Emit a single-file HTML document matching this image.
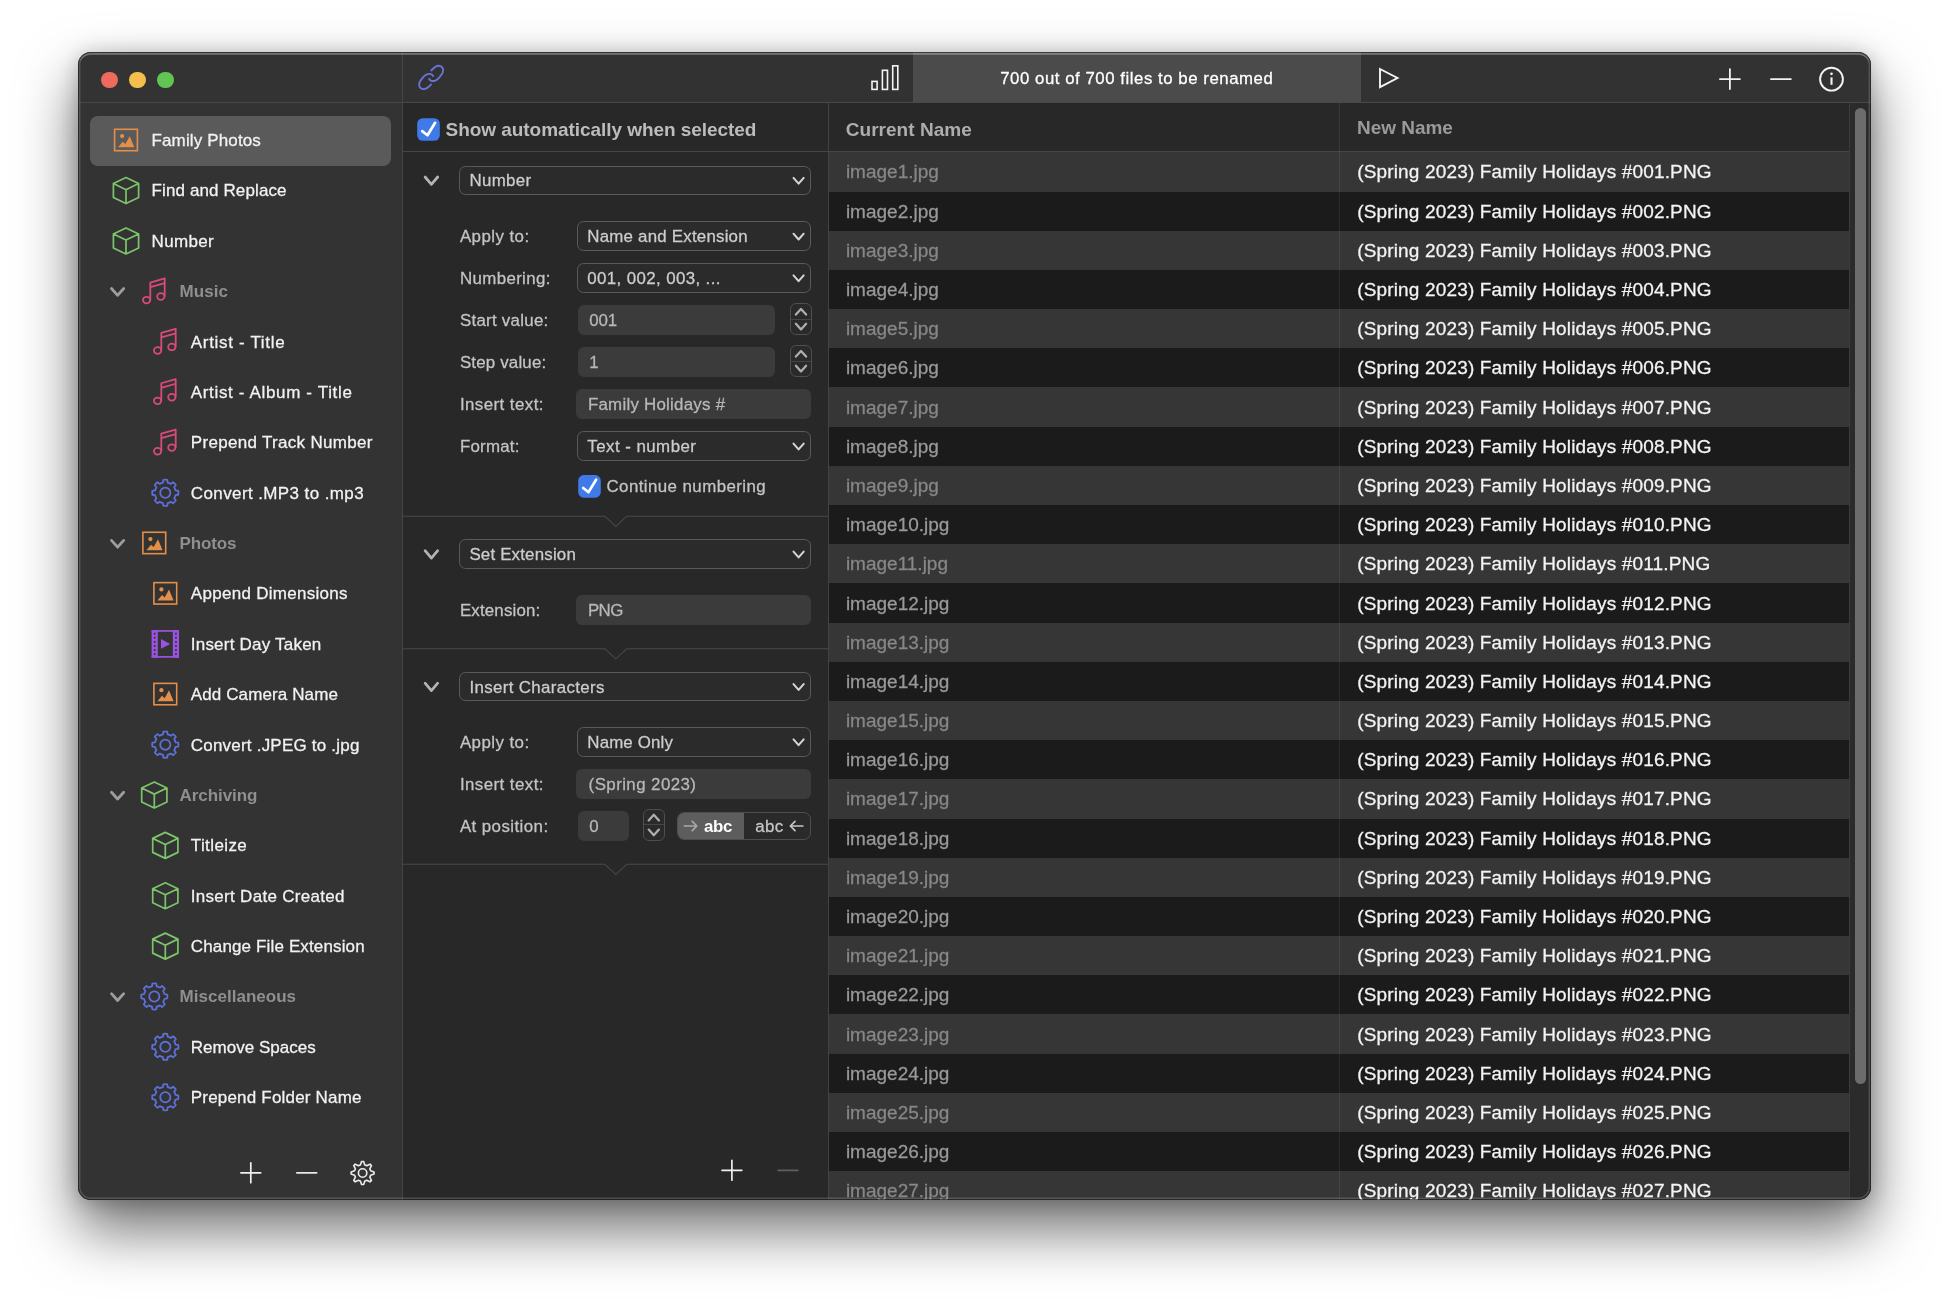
<!DOCTYPE html>
<html lang="en"><head><meta charset="utf-8"><title>Renamer</title>
<style>
html,body{margin:0;padding:0;background:#fff;}
body{width:1949px;height:1303px;position:relative;overflow:hidden;font-family:"Liberation Sans", sans-serif;}
.win{position:absolute;left:78px;top:52px;width:1793px;height:1148px;border-radius:13px;background:#282828;
 box-shadow:0 29px 58px 1px rgba(0,0,0,.56),0 2px 20px rgba(0,0,0,.22);}
.clip{position:absolute;left:0;top:0;width:1793px;height:1148px;border-radius:13px;overflow:hidden;}
.pg{position:absolute;left:-78px;top:-52px;width:1949px;height:1303px;will-change:transform;}
.a{position:absolute;display:block;overflow:visible;}
.t{position:absolute;white-space:nowrap;line-height:24px;height:24px;-webkit-text-stroke:0.28px currentColor;}
.b{position:absolute;box-sizing:border-box;}
.pop{position:absolute;box-sizing:border-box;border:1px solid #5a5a5a;border-radius:6.5px;background:#2b2b2b;}
.fld{position:absolute;box-sizing:border-box;border-radius:6px;background:#3b3b3b;}
.stp{position:absolute;box-sizing:border-box;border:1px solid #4e4e4e;border-radius:6px;background:#2a2a2a;}
.rim{position:absolute;left:0;top:0;right:0;bottom:0;border-radius:13px;box-shadow:inset 0 0 0 0.9px rgba(0,0,0,.55), inset 0 0 0 2.4px rgba(255,255,255,.17), inset 0 3px 0 0 rgba(255,255,255,.18);pointer-events:none;}

</style></head><body>
<div class="win"><div class="clip"><div class="pg">
<div class="b" style="left:78px;top:52px;width:324.5px;height:1148px;background:#333333"></div>
<div class="b" style="left:402.5px;top:52px;width:1469px;height:50.5px;background:#323232"></div>
<div class="b" style="left:913px;top:52px;width:448px;height:50.5px;background:#4b4b4b"></div>
<div class="b" style="left:78px;top:101.9px;width:1793px;height:1.4px;background:#484848"></div>
<div class="b" style="left:402px;top:52px;width:1px;height:1148px;background:#454545"></div>
<div class="b" style="left:403px;top:103px;width:425px;height:1096px;background:#282828"></div>
<div class="b" style="left:828px;top:103px;width:1px;height:1096px;background:#434343"></div>
<div class="b" style="left:829px;top:103px;width:1042px;height:48.5px;background:#282828"></div>
<div class="b" style="left:403px;top:151.3px;width:1446px;height:1px;background:#454545"></div>
<div class="b" style="left:100.89999999999999px;top:71.6px;width:16.8px;height:16.8px;border-radius:50%;background:#ec6a5e"></div>
<div class="b" style="left:128.9px;top:71.6px;width:16.8px;height:16.8px;border-radius:50%;background:#f5bf4f"></div>
<div class="b" style="left:156.9px;top:71.6px;width:16.8px;height:16.8px;border-radius:50%;background:#61c554"></div>
<div class="b" style="left:90px;top:115.5px;width:301px;height:50px;border-radius:8px;background:#5a5a5a"></div>
<svg class="a" style="left:113px;top:128px" width="26" height="24" viewBox="0 0 26 24"><g transform="translate(0.80 0.50)"><rect x="0.8" y="0.8" width="22.799999999999997" height="21.4" fill="none" stroke="#e48f49" stroke-width="1.6"/><circle cx="8.3" cy="7.6" r="2.1" fill="#e48f49"/><path d="M4.3 18.7 L8.9 13.2 L11.6 15.6 L15.9 7.7 L20.5 18.7 Z" fill="#e48f49"/></g></svg>
<div class="t" style="left:151.50px;top:129.11px;font-size:17.0px;color:#f2f2f2;letter-spacing:0.138px;">Family Photos</div>
<svg class="a" style="left:112px;top:176px" width="29" height="30" viewBox="0 0 29 30"><g transform="translate(0.00 0.47)"><path d="M14.00 1.10 L26.60 7.10 L26.60 21.10 L14.00 27.10 L1.40 21.10 L1.40 7.10 Z M1.40 7.10 L14.00 13.20 L26.60 7.10 M14.00 13.20 L14.00 27.10" fill="none" stroke="#7cc56b" stroke-width="1.7" stroke-linejoin="round" stroke-linecap="round"/></g></svg>
<div class="t" style="left:151.50px;top:179.48px;font-size:17.0px;color:#f2f2f2;letter-spacing:0.121px;">Find and Replace</div>
<svg class="a" style="left:112px;top:226px" width="29" height="30" viewBox="0 0 29 30"><g transform="translate(0.00 0.84)"><path d="M14.00 1.10 L26.60 7.10 L26.60 21.10 L14.00 27.10 L1.40 21.10 L1.40 7.10 Z M1.40 7.10 L14.00 13.20 L26.60 7.10 M14.00 13.20 L14.00 27.10" fill="none" stroke="#7cc56b" stroke-width="1.7" stroke-linejoin="round" stroke-linecap="round"/></g></svg>
<div class="t" style="left:151.50px;top:229.85px;font-size:17.0px;color:#f2f2f2;letter-spacing:0.355px;">Number</div>
<svg class="a" style="left:109px;top:286px" width="18" height="12" viewBox="0 0 18 12"><g transform="translate(0.50 0.51)"><path d="M2 2 L8.10 8.80 L14.20 2" fill="none" stroke="#9e9e9e" stroke-width="2.8" stroke-linecap="round" stroke-linejoin="round"/></g></svg>
<svg class="a" style="left:141px;top:277px" width="27" height="30" viewBox="0 0 27 30"><g transform="translate(0.70 0.11)"><g fill="none" stroke="#d94a7c" stroke-width="1.8" stroke-linecap="round" stroke-linejoin="round"><ellipse cx="4.9" cy="23.0" rx="3.6" ry="3.3"/><ellipse cx="19.1" cy="19.4" rx="3.6" ry="3.3"/><path d="M8.6 22.6 V5.4 L23.0 1.3 V19.0 M8.6 10.0 L23.0 5.9"/></g></g></svg>
<div class="t" style="left:179.60px;top:280.22px;font-size:17.0px;color:#8f8f8f;font-weight:700;-webkit-text-stroke:0;letter-spacing:0.023px;">Music</div>
<svg class="a" style="left:152px;top:327px" width="27" height="30" viewBox="0 0 27 30"><g transform="translate(0.70 0.48)"><g fill="none" stroke="#d94a7c" stroke-width="1.8" stroke-linecap="round" stroke-linejoin="round"><ellipse cx="4.9" cy="23.0" rx="3.6" ry="3.3"/><ellipse cx="19.1" cy="19.4" rx="3.6" ry="3.3"/><path d="M8.6 22.6 V5.4 L23.0 1.3 V19.0 M8.6 10.0 L23.0 5.9"/></g></g></svg>
<div class="t" style="left:190.80px;top:330.59px;font-size:17.0px;color:#f2f2f2;letter-spacing:0.677px;">Artist - Title</div>
<svg class="a" style="left:152px;top:377px" width="27" height="30" viewBox="0 0 27 30"><g transform="translate(0.70 0.85)"><g fill="none" stroke="#d94a7c" stroke-width="1.8" stroke-linecap="round" stroke-linejoin="round"><ellipse cx="4.9" cy="23.0" rx="3.6" ry="3.3"/><ellipse cx="19.1" cy="19.4" rx="3.6" ry="3.3"/><path d="M8.6 22.6 V5.4 L23.0 1.3 V19.0 M8.6 10.0 L23.0 5.9"/></g></g></svg>
<div class="t" style="left:190.80px;top:380.96px;font-size:17.0px;color:#f2f2f2;letter-spacing:0.651px;">Artist - Album - Title</div>
<svg class="a" style="left:152px;top:428px" width="27" height="30" viewBox="0 0 27 30"><g transform="translate(0.70 0.22)"><g fill="none" stroke="#d94a7c" stroke-width="1.8" stroke-linecap="round" stroke-linejoin="round"><ellipse cx="4.9" cy="23.0" rx="3.6" ry="3.3"/><ellipse cx="19.1" cy="19.4" rx="3.6" ry="3.3"/><path d="M8.6 22.6 V5.4 L23.0 1.3 V19.0 M8.6 10.0 L23.0 5.9"/></g></g></svg>
<div class="t" style="left:190.80px;top:431.33px;font-size:17.0px;color:#f2f2f2;letter-spacing:0.312px;">Prepend Track Number</div>
<svg class="a" style="left:150px;top:477px" width="31" height="31" viewBox="0 0 31 31"><g transform="translate(0.30 0.79)"><path d="M25.22 12.66 L27.95 13.04 A13.10 13.10 0 0 1 27.95 16.96 L25.22 17.34 A10.48 10.48 0 0 1 23.88 20.57 L25.54 22.77 A13.10 13.10 0 0 1 22.77 25.54 L20.57 23.88 A10.48 10.48 0 0 1 17.34 25.22 L16.96 27.95 A13.10 13.10 0 0 1 13.04 27.95 L12.66 25.22 A10.48 10.48 0 0 1 9.43 23.88 L7.23 25.54 A13.10 13.10 0 0 1 4.46 22.77 L6.12 20.57 A10.48 10.48 0 0 1 4.78 17.34 L2.05 16.96 A13.10 13.10 0 0 1 2.05 13.04 L4.78 12.66 A10.48 10.48 0 0 1 6.12 9.43 L4.46 7.23 A13.10 13.10 0 0 1 7.23 4.46 L9.43 6.12 A10.48 10.48 0 0 1 12.66 4.78 L13.04 2.05 A13.10 13.10 0 0 1 16.96 2.05 L17.34 4.78 A10.48 10.48 0 0 1 20.57 6.12 L22.77 4.46 A13.10 13.10 0 0 1 25.54 7.23 L23.88 9.43 A10.48 10.48 0 0 1 25.22 12.66 Z" fill="none" stroke="#5d6fd9" stroke-width="1.8" stroke-linejoin="round"/><circle cx="15.0" cy="15.0" r="5.1" fill="none" stroke="#5d6fd9" stroke-width="1.8"/></g></svg>
<div class="t" style="left:190.80px;top:481.70px;font-size:17.0px;color:#f2f2f2;letter-spacing:0.393px;">Convert .MP3 to .mp3</div>
<svg class="a" style="left:109px;top:538px" width="18" height="12" viewBox="0 0 18 12"><g transform="translate(0.50 0.36)"><path d="M2 2 L8.10 8.80 L14.20 2" fill="none" stroke="#9e9e9e" stroke-width="2.8" stroke-linecap="round" stroke-linejoin="round"/></g></svg>
<svg class="a" style="left:142px;top:531px" width="26" height="24" viewBox="0 0 26 24"><g transform="translate(0.10 0.46)"><rect x="0.8" y="0.8" width="22.799999999999997" height="21.4" fill="none" stroke="#e48f49" stroke-width="1.6"/><circle cx="8.3" cy="7.6" r="2.1" fill="#e48f49"/><path d="M4.3 18.7 L8.9 13.2 L11.6 15.6 L15.9 7.7 L20.5 18.7 Z" fill="#e48f49"/></g></svg>
<div class="t" style="left:179.60px;top:532.07px;font-size:17.0px;color:#8f8f8f;font-weight:700;-webkit-text-stroke:0;letter-spacing:-0.135px;">Photos</div>
<svg class="a" style="left:153px;top:581px" width="26" height="24" viewBox="0 0 26 24"><g transform="translate(0.10 0.83)"><rect x="0.8" y="0.8" width="22.799999999999997" height="21.4" fill="none" stroke="#e48f49" stroke-width="1.6"/><circle cx="8.3" cy="7.6" r="2.1" fill="#e48f49"/><path d="M4.3 18.7 L8.9 13.2 L11.6 15.6 L15.9 7.7 L20.5 18.7 Z" fill="#e48f49"/></g></svg>
<div class="t" style="left:190.80px;top:582.44px;font-size:17.0px;color:#f2f2f2;letter-spacing:0.285px;">Append Dimensions</div>
<svg class="a" style="left:151px;top:630px" width="29" height="29" viewBox="0 0 29 29"><g transform="translate(0.60 0.10)"><rect x="0" y="0" width="6.2" height="27.6" fill="#9a53e0"/><rect x="21.2" y="0" width="6.2" height="27.6" fill="#9a53e0"/><rect x="0" y="0" width="27.4" height="1.7" fill="#9a53e0"/><rect x="0" y="25.900000000000002" width="27.4" height="1.7" fill="#9a53e0"/><rect x="2.2" y="2.60" width="1.7" height="1.9" fill="#333"/><rect x="23.50" y="2.60" width="1.7" height="1.9" fill="#333"/><rect x="2.2" y="6.70" width="1.7" height="1.9" fill="#333"/><rect x="23.50" y="6.70" width="1.7" height="1.9" fill="#333"/><rect x="2.2" y="10.80" width="1.7" height="1.9" fill="#333"/><rect x="23.50" y="10.80" width="1.7" height="1.9" fill="#333"/><rect x="2.2" y="14.90" width="1.7" height="1.9" fill="#333"/><rect x="23.50" y="14.90" width="1.7" height="1.9" fill="#333"/><rect x="2.2" y="19.00" width="1.7" height="1.9" fill="#333"/><rect x="23.50" y="19.00" width="1.7" height="1.9" fill="#333"/><rect x="2.2" y="23.10" width="1.7" height="1.9" fill="#333"/><rect x="23.50" y="23.10" width="1.7" height="1.9" fill="#333"/><path d="M9.4 9.0 L18.6 13.8 L9.4 18.6 Z" fill="#9a53e0"/></g></svg>
<div class="t" style="left:190.80px;top:632.81px;font-size:17.0px;color:#f2f2f2;letter-spacing:0.215px;">Insert Day Taken</div>
<svg class="a" style="left:153px;top:682px" width="26" height="24" viewBox="0 0 26 24"><g transform="translate(0.10 0.57)"><rect x="0.8" y="0.8" width="22.799999999999997" height="21.4" fill="none" stroke="#e48f49" stroke-width="1.6"/><circle cx="8.3" cy="7.6" r="2.1" fill="#e48f49"/><path d="M4.3 18.7 L8.9 13.2 L11.6 15.6 L15.9 7.7 L20.5 18.7 Z" fill="#e48f49"/></g></svg>
<div class="t" style="left:190.80px;top:683.18px;font-size:17.0px;color:#f2f2f2;letter-spacing:0.112px;">Add Camera Name</div>
<svg class="a" style="left:150px;top:729px" width="31" height="31" viewBox="0 0 31 31"><g transform="translate(0.30 0.64)"><path d="M25.22 12.66 L27.95 13.04 A13.10 13.10 0 0 1 27.95 16.96 L25.22 17.34 A10.48 10.48 0 0 1 23.88 20.57 L25.54 22.77 A13.10 13.10 0 0 1 22.77 25.54 L20.57 23.88 A10.48 10.48 0 0 1 17.34 25.22 L16.96 27.95 A13.10 13.10 0 0 1 13.04 27.95 L12.66 25.22 A10.48 10.48 0 0 1 9.43 23.88 L7.23 25.54 A13.10 13.10 0 0 1 4.46 22.77 L6.12 20.57 A10.48 10.48 0 0 1 4.78 17.34 L2.05 16.96 A13.10 13.10 0 0 1 2.05 13.04 L4.78 12.66 A10.48 10.48 0 0 1 6.12 9.43 L4.46 7.23 A13.10 13.10 0 0 1 7.23 4.46 L9.43 6.12 A10.48 10.48 0 0 1 12.66 4.78 L13.04 2.05 A13.10 13.10 0 0 1 16.96 2.05 L17.34 4.78 A10.48 10.48 0 0 1 20.57 6.12 L22.77 4.46 A13.10 13.10 0 0 1 25.54 7.23 L23.88 9.43 A10.48 10.48 0 0 1 25.22 12.66 Z" fill="none" stroke="#5d6fd9" stroke-width="1.8" stroke-linejoin="round"/><circle cx="15.0" cy="15.0" r="5.1" fill="none" stroke="#5d6fd9" stroke-width="1.8"/></g></svg>
<div class="t" style="left:190.80px;top:733.55px;font-size:17.0px;color:#f2f2f2;letter-spacing:0.209px;">Convert .JPEG to .jpg</div>
<svg class="a" style="left:109px;top:790px" width="18" height="12" viewBox="0 0 18 12"><g transform="translate(0.50 0.21)"><path d="M2 2 L8.10 8.80 L14.20 2" fill="none" stroke="#9e9e9e" stroke-width="2.8" stroke-linecap="round" stroke-linejoin="round"/></g></svg>
<svg class="a" style="left:140px;top:780px" width="29" height="30" viewBox="0 0 29 30"><g transform="translate(0.30 0.91)"><path d="M14.00 1.10 L26.60 7.10 L26.60 21.10 L14.00 27.10 L1.40 21.10 L1.40 7.10 Z M1.40 7.10 L14.00 13.20 L26.60 7.10 M14.00 13.20 L14.00 27.10" fill="none" stroke="#7cc56b" stroke-width="1.7" stroke-linejoin="round" stroke-linecap="round"/></g></svg>
<div class="t" style="left:179.60px;top:783.92px;font-size:17.0px;color:#8f8f8f;font-weight:700;-webkit-text-stroke:0;letter-spacing:-0.078px;">Archiving</div>
<svg class="a" style="left:151px;top:831px" width="29" height="30" viewBox="0 0 29 30"><g transform="translate(0.30 0.28)"><path d="M14.00 1.10 L26.60 7.10 L26.60 21.10 L14.00 27.10 L1.40 21.10 L1.40 7.10 Z M1.40 7.10 L14.00 13.20 L26.60 7.10 M14.00 13.20 L14.00 27.10" fill="none" stroke="#7cc56b" stroke-width="1.7" stroke-linejoin="round" stroke-linecap="round"/></g></svg>
<div class="t" style="left:190.80px;top:834.29px;font-size:17.0px;color:#f2f2f2;letter-spacing:0.398px;">Titleize</div>
<svg class="a" style="left:151px;top:881px" width="29" height="30" viewBox="0 0 29 30"><g transform="translate(0.30 0.65)"><path d="M14.00 1.10 L26.60 7.10 L26.60 21.10 L14.00 27.10 L1.40 21.10 L1.40 7.10 Z M1.40 7.10 L14.00 13.20 L26.60 7.10 M14.00 13.20 L14.00 27.10" fill="none" stroke="#7cc56b" stroke-width="1.7" stroke-linejoin="round" stroke-linecap="round"/></g></svg>
<div class="t" style="left:190.80px;top:884.66px;font-size:17.0px;color:#f2f2f2;letter-spacing:0.292px;">Insert Date Created</div>
<svg class="a" style="left:151px;top:932px" width="29" height="30" viewBox="0 0 29 30"><g transform="translate(0.30 0.02)"><path d="M14.00 1.10 L26.60 7.10 L26.60 21.10 L14.00 27.10 L1.40 21.10 L1.40 7.10 Z M1.40 7.10 L14.00 13.20 L26.60 7.10 M14.00 13.20 L14.00 27.10" fill="none" stroke="#7cc56b" stroke-width="1.7" stroke-linejoin="round" stroke-linecap="round"/></g></svg>
<div class="t" style="left:190.80px;top:935.03px;font-size:17.0px;color:#f2f2f2;letter-spacing:0.141px;">Change File Extension</div>
<svg class="a" style="left:109px;top:991px" width="18" height="12" viewBox="0 0 18 12"><g transform="translate(0.50 0.69)"><path d="M2 2 L8.10 8.80 L14.20 2" fill="none" stroke="#9e9e9e" stroke-width="2.8" stroke-linecap="round" stroke-linejoin="round"/></g></svg>
<svg class="a" style="left:139px;top:981px" width="31" height="31" viewBox="0 0 31 31"><g transform="translate(0.30 0.49)"><path d="M25.22 12.66 L27.95 13.04 A13.10 13.10 0 0 1 27.95 16.96 L25.22 17.34 A10.48 10.48 0 0 1 23.88 20.57 L25.54 22.77 A13.10 13.10 0 0 1 22.77 25.54 L20.57 23.88 A10.48 10.48 0 0 1 17.34 25.22 L16.96 27.95 A13.10 13.10 0 0 1 13.04 27.95 L12.66 25.22 A10.48 10.48 0 0 1 9.43 23.88 L7.23 25.54 A13.10 13.10 0 0 1 4.46 22.77 L6.12 20.57 A10.48 10.48 0 0 1 4.78 17.34 L2.05 16.96 A13.10 13.10 0 0 1 2.05 13.04 L4.78 12.66 A10.48 10.48 0 0 1 6.12 9.43 L4.46 7.23 A13.10 13.10 0 0 1 7.23 4.46 L9.43 6.12 A10.48 10.48 0 0 1 12.66 4.78 L13.04 2.05 A13.10 13.10 0 0 1 16.96 2.05 L17.34 4.78 A10.48 10.48 0 0 1 20.57 6.12 L22.77 4.46 A13.10 13.10 0 0 1 25.54 7.23 L23.88 9.43 A10.48 10.48 0 0 1 25.22 12.66 Z" fill="none" stroke="#5d6fd9" stroke-width="1.8" stroke-linejoin="round"/><circle cx="15.0" cy="15.0" r="5.1" fill="none" stroke="#5d6fd9" stroke-width="1.8"/></g></svg>
<div class="t" style="left:179.60px;top:985.40px;font-size:17.0px;color:#8f8f8f;font-weight:700;-webkit-text-stroke:0;letter-spacing:0.022px;">Miscellaneous</div>
<svg class="a" style="left:150px;top:1031px" width="31" height="31" viewBox="0 0 31 31"><g transform="translate(0.30 0.86)"><path d="M25.22 12.66 L27.95 13.04 A13.10 13.10 0 0 1 27.95 16.96 L25.22 17.34 A10.48 10.48 0 0 1 23.88 20.57 L25.54 22.77 A13.10 13.10 0 0 1 22.77 25.54 L20.57 23.88 A10.48 10.48 0 0 1 17.34 25.22 L16.96 27.95 A13.10 13.10 0 0 1 13.04 27.95 L12.66 25.22 A10.48 10.48 0 0 1 9.43 23.88 L7.23 25.54 A13.10 13.10 0 0 1 4.46 22.77 L6.12 20.57 A10.48 10.48 0 0 1 4.78 17.34 L2.05 16.96 A13.10 13.10 0 0 1 2.05 13.04 L4.78 12.66 A10.48 10.48 0 0 1 6.12 9.43 L4.46 7.23 A13.10 13.10 0 0 1 7.23 4.46 L9.43 6.12 A10.48 10.48 0 0 1 12.66 4.78 L13.04 2.05 A13.10 13.10 0 0 1 16.96 2.05 L17.34 4.78 A10.48 10.48 0 0 1 20.57 6.12 L22.77 4.46 A13.10 13.10 0 0 1 25.54 7.23 L23.88 9.43 A10.48 10.48 0 0 1 25.22 12.66 Z" fill="none" stroke="#5d6fd9" stroke-width="1.8" stroke-linejoin="round"/><circle cx="15.0" cy="15.0" r="5.1" fill="none" stroke="#5d6fd9" stroke-width="1.8"/></g></svg>
<div class="t" style="left:190.80px;top:1035.77px;font-size:17.0px;color:#f2f2f2;letter-spacing:0.020px;">Remove Spaces</div>
<svg class="a" style="left:150px;top:1082px" width="31" height="31" viewBox="0 0 31 31"><g transform="translate(0.30 0.23)"><path d="M25.22 12.66 L27.95 13.04 A13.10 13.10 0 0 1 27.95 16.96 L25.22 17.34 A10.48 10.48 0 0 1 23.88 20.57 L25.54 22.77 A13.10 13.10 0 0 1 22.77 25.54 L20.57 23.88 A10.48 10.48 0 0 1 17.34 25.22 L16.96 27.95 A13.10 13.10 0 0 1 13.04 27.95 L12.66 25.22 A10.48 10.48 0 0 1 9.43 23.88 L7.23 25.54 A13.10 13.10 0 0 1 4.46 22.77 L6.12 20.57 A10.48 10.48 0 0 1 4.78 17.34 L2.05 16.96 A13.10 13.10 0 0 1 2.05 13.04 L4.78 12.66 A10.48 10.48 0 0 1 6.12 9.43 L4.46 7.23 A13.10 13.10 0 0 1 7.23 4.46 L9.43 6.12 A10.48 10.48 0 0 1 12.66 4.78 L13.04 2.05 A13.10 13.10 0 0 1 16.96 2.05 L17.34 4.78 A10.48 10.48 0 0 1 20.57 6.12 L22.77 4.46 A13.10 13.10 0 0 1 25.54 7.23 L23.88 9.43 A10.48 10.48 0 0 1 25.22 12.66 Z" fill="none" stroke="#5d6fd9" stroke-width="1.8" stroke-linejoin="round"/><circle cx="15.0" cy="15.0" r="5.1" fill="none" stroke="#5d6fd9" stroke-width="1.8"/></g></svg>
<div class="t" style="left:190.80px;top:1086.14px;font-size:17.0px;color:#f2f2f2;letter-spacing:0.191px;">Prepend Folder Name</div>
<svg class="a" style="left:239px;top:1161px" width="23" height="23" viewBox="0 0 23 23"><g transform="translate(0.90 0.90)"><path d="M1 10.9 H20.8 M10.9 1 V20.8" stroke="#f0f0f0" stroke-width="1.7" stroke-linecap="round" fill="none"/></g></svg>
<svg class="a" style="left:295px;top:1170px" width="23" height="5" viewBox="0 0 23 5"><g transform="translate(0.80 0.80)"><path d="M1 2 H20.8" stroke="#e8e8e8" stroke-width="1.7" stroke-linecap="round" fill="none"/></g></svg>
<svg class="a" style="left:348px;top:1159px" width="29" height="29" viewBox="0 0 29 29"><g transform="translate(0.60 0.00)"><path d="M22.00 11.79 L25.45 12.97 A11.50 11.50 0 0 1 25.45 15.03 L22.00 16.21 A8.30 8.30 0 0 1 21.22 18.09 L22.83 21.37 A11.50 11.50 0 0 1 21.37 22.83 L18.09 21.22 A8.30 8.30 0 0 1 16.21 22.00 L15.03 25.45 A11.50 11.50 0 0 1 12.97 25.45 L11.79 22.00 A8.30 8.30 0 0 1 9.91 21.22 L6.63 22.83 A11.50 11.50 0 0 1 5.17 21.37 L6.78 18.09 A8.30 8.30 0 0 1 6.00 16.21 L2.55 15.03 A11.50 11.50 0 0 1 2.55 12.97 L6.00 11.79 A8.30 8.30 0 0 1 6.78 9.91 L5.17 6.63 A11.50 11.50 0 0 1 6.63 5.17 L9.91 6.78 A8.30 8.30 0 0 1 11.79 6.00 L12.97 2.55 A11.50 11.50 0 0 1 15.03 2.55 L16.21 6.00 A8.30 8.30 0 0 1 18.09 6.78 L21.37 5.17 A11.50 11.50 0 0 1 22.83 6.63 L21.22 9.91 A8.30 8.30 0 0 1 22.00 11.79 Z" fill="none" stroke="#ececec" stroke-width="1.6" stroke-linejoin="round"/><circle cx="14" cy="14" r="4.2" fill="none" stroke="#ececec" stroke-width="1.6"/></g></svg>
<svg class="a" style="left:410px;top:56px" width="45" height="45" viewBox="0 0 45 45"><g transform="translate(0.00 0.00)"><path d="M21.28 14.39 C21.66 14.02 22.82 12.79 23.59 12.15 C24.35 11.50 25.12 10.93 25.89 10.54 C26.66 10.15 27.43 9.86 28.20 9.80 C28.97 9.75 29.82 9.91 30.50 10.22 C31.19 10.53 31.89 11.05 32.31 11.66 C32.74 12.28 33.02 13.11 33.07 13.91 C33.13 14.71 32.96 15.62 32.64 16.48 C32.33 17.33 31.74 18.19 31.16 19.05 C30.58 19.90 29.90 20.84 29.18 21.61 C28.47 22.39 27.65 23.16 26.88 23.70 C26.11 24.23 25.34 24.61 24.57 24.82 C23.80 25.04 22.98 25.09 22.27 24.98 C21.55 24.88 20.81 24.53 20.29 24.18 C19.77 23.83 19.33 23.11 19.14 22.90 M20.95 28.51 C20.57 28.89 19.41 30.12 18.64 30.76 C17.88 31.40 17.11 31.97 16.34 32.36 C15.57 32.76 14.80 33.05 14.03 33.10 C13.26 33.16 12.41 33.00 11.73 32.69 C11.04 32.38 10.34 31.86 9.92 31.24 C9.49 30.63 9.21 29.80 9.16 28.99 C9.10 28.19 9.27 27.28 9.59 26.43 C9.90 25.57 10.49 24.72 11.07 23.86 C11.64 23.00 12.33 22.07 13.04 21.29 C13.76 20.52 14.58 19.74 15.35 19.21 C16.12 18.67 16.89 18.30 17.66 18.08 C18.42 17.87 19.25 17.82 19.96 17.92 C20.68 18.03 21.42 18.38 21.94 18.72 C22.46 19.07 22.90 19.79 23.09 20.01" fill="none" stroke="#6a73d8" stroke-width="1.9" stroke-linecap="round"/></g></svg>
<svg class="a" style="left:871px;top:65px" width="29" height="27" viewBox="0 0 29 27"><g transform="translate(0.20 0.00)"><g fill="none" stroke="#f4f4f4" stroke-width="1.6"><rect x="0.8" y="16.4" width="5.1" height="8.0"/><rect x="11.2" y="5.3" width="5.1" height="19.1"/><rect x="21.5" y="0.8" width="5.1" height="23.6"/></g></g></svg>
<div class="t" style="left:1000.20px;top:66.88px;font-size:16.8px;color:#ffffff;letter-spacing:0.541px;">700 out of 700 files to be renamed</div>
<svg class="a" style="left:1377px;top:65px" width="25" height="27" viewBox="0 0 25 27"><g transform="translate(0.00 0.00)"><path d="M3 4 L20.5 13 L3 22.2 Z" fill="none" stroke="#f4f4f4" stroke-width="1.9" stroke-linejoin="miter"/></g></svg>
<svg class="a" style="left:1718px;top:68px" width="23" height="23" viewBox="0 0 23 23"><g transform="translate(0.90 0.10)"><path d="M1 11.0 H21.0 M11.0 1 V21.0" stroke="#f2f2f2" stroke-width="1.8" stroke-linecap="round" fill="none"/></g></svg>
<svg class="a" style="left:1769px;top:77px" width="23" height="5" viewBox="0 0 23 5"><g transform="translate(0.90 0.10)"><path d="M1 2 H21.0" stroke="#f2f2f2" stroke-width="1.8" stroke-linecap="round" fill="none"/></g></svg>
<svg class="a" style="left:1817px;top:65px" width="29" height="29" viewBox="0 0 29 29"><g transform="translate(0.50 0.20)"><circle cx="14" cy="14" r="11.4" fill="none" stroke="#f4f4f4" stroke-width="1.9"/><path d="M14 12.2 V19.6" stroke="#f4f4f4" stroke-width="2.1" fill="none"/><circle cx="14" cy="8.6" r="1.35" fill="#f4f4f4"/></g></svg>
<svg class="a" style="left:417px;top:118px" width="24" height="24" viewBox="0 0 24 24"><g transform="translate(0.20 0.20)"><rect x="0" y="0" width="22.6" height="22.6" rx="5.6" fill="#3f7ae8"/><path d="M5.0 12.9 L10.3 17.0 L17.9 4.6" fill="none" stroke="#fff" stroke-width="2.7" stroke-linecap="round" stroke-linejoin="round"/></g></svg>
<div class="t" style="left:445.60px;top:117.82px;font-size:19.0px;color:#bcbcbc;font-weight:700;-webkit-text-stroke:0;letter-spacing:-0.055px;">Show automatically when selected</div>
<svg class="a" style="left:423px;top:175px" width="18" height="13" viewBox="0 0 18 13"><g transform="translate(0.10 0.00)"><path d="M2 2 L8.30 9.40 L14.60 2" fill="none" stroke="#b4b4b4" stroke-width="2.7" stroke-linecap="round" stroke-linejoin="round"/></g></svg>
<div class="pop" style="left:459.4px;top:165.50px;width:351.2px;height:29.6px"></div><div class="t" style="left:469.40px;top:169.44px;font-size:16.9px;color:#cdcdcd;letter-spacing:0.354px;">Number</div><svg class="a" style="left:791px;top:175px" width="16" height="11" viewBox="0 0 16 11"><g transform="translate(0.50 0.90)"><path d="M2 2 L7.10 7.80 L12.20 2" fill="none" stroke="#d6d6d6" stroke-width="2.0" stroke-linecap="round" stroke-linejoin="round"/></g></svg>
<div class="t" style="left:459.90px;top:225.24px;font-size:16.9px;color:#c4c4c4;letter-spacing:0.441px;">Apply to:</div>
<div class="pop" style="left:577.3px;top:221.30px;width:233.3px;height:29.6px"></div><div class="t" style="left:587.30px;top:225.24px;font-size:16.9px;color:#cdcdcd;letter-spacing:0.205px;">Name and Extension</div><svg class="a" style="left:791px;top:231px" width="16" height="11" viewBox="0 0 16 11"><g transform="translate(0.50 0.70)"><path d="M2 2 L7.10 7.80 L12.20 2" fill="none" stroke="#d6d6d6" stroke-width="2.0" stroke-linecap="round" stroke-linejoin="round"/></g></svg>
<div class="t" style="left:459.90px;top:266.94px;font-size:16.9px;color:#c4c4c4;letter-spacing:0.359px;">Numbering:</div>
<div class="pop" style="left:577.3px;top:263.00px;width:233.3px;height:29.6px"></div><div class="t" style="left:587.30px;top:266.94px;font-size:16.9px;color:#cdcdcd;letter-spacing:0.373px;">001, 002, 003, ...</div><svg class="a" style="left:791px;top:273px" width="16" height="11" viewBox="0 0 16 11"><g transform="translate(0.50 0.40)"><path d="M2 2 L7.10 7.80 L12.20 2" fill="none" stroke="#d6d6d6" stroke-width="2.0" stroke-linecap="round" stroke-linejoin="round"/></g></svg>
<div class="t" style="left:459.90px;top:309.14px;font-size:16.9px;color:#c4c4c4;letter-spacing:0.264px;">Start value:</div>
<div class="fld" style="left:578.2px;top:304.90px;width:197.2px;height:30.2px"></div><div class="t" style="left:589.20px;top:309.14px;font-size:16.9px;color:#b8b8b8;letter-spacing:-0.129px;">001</div>
<div class="stp" style="left:790.2px;top:303.10px;width:21.6px;height:31.8px"></div><div class="b" style="left:791.2px;top:318.50px;width:19.6px;height:1px;background:#454545"></div><svg class="a" style="left:793px;top:307px" width="16" height="11" viewBox="0 0 16 11"><g transform="translate(0.90 0.00)"><path d="M2 7.60 L7.10 2 L12.20 7.60" fill="none" stroke="#aeaeae" stroke-width="2.3" stroke-linecap="round" stroke-linejoin="round"/></g></svg><svg class="a" style="left:793px;top:321px" width="16" height="11" viewBox="0 0 16 11"><g transform="translate(0.90 0.80)"><path d="M2 2 L7.10 7.60 L12.20 2" fill="none" stroke="#aeaeae" stroke-width="2.3" stroke-linecap="round" stroke-linejoin="round"/></g></svg>
<div class="t" style="left:459.90px;top:351.14px;font-size:16.9px;color:#c4c4c4;letter-spacing:0.180px;">Step value:</div>
<div class="fld" style="left:578.2px;top:346.90px;width:197.2px;height:30.2px"></div><div class="t" style="left:589.20px;top:351.14px;font-size:16.9px;color:#b8b8b8;">1</div>
<div class="stp" style="left:790.2px;top:345.10px;width:21.6px;height:31.8px"></div><div class="b" style="left:791.2px;top:360.50px;width:19.6px;height:1px;background:#454545"></div><svg class="a" style="left:793px;top:349px" width="16" height="11" viewBox="0 0 16 11"><g transform="translate(0.90 0.00)"><path d="M2 7.60 L7.10 2 L12.20 7.60" fill="none" stroke="#aeaeae" stroke-width="2.3" stroke-linecap="round" stroke-linejoin="round"/></g></svg><svg class="a" style="left:793px;top:363px" width="16" height="11" viewBox="0 0 16 11"><g transform="translate(0.90 0.80)"><path d="M2 2 L7.10 7.60 L12.20 2" fill="none" stroke="#aeaeae" stroke-width="2.3" stroke-linecap="round" stroke-linejoin="round"/></g></svg>
<div class="t" style="left:459.90px;top:393.14px;font-size:16.9px;color:#c4c4c4;letter-spacing:0.428px;">Insert text:</div>
<div class="fld" style="left:576.2px;top:388.90px;width:234.4px;height:30.2px"></div><div class="t" style="left:587.90px;top:393.14px;font-size:16.9px;color:#b8b8b8;letter-spacing:0.241px;">Family Holidays #</div>
<div class="t" style="left:459.90px;top:435.14px;font-size:16.9px;color:#c4c4c4;letter-spacing:0.230px;">Format:</div>
<div class="pop" style="left:577.3px;top:431.20px;width:233.3px;height:29.6px"></div><div class="t" style="left:587.30px;top:435.14px;font-size:16.9px;color:#cdcdcd;letter-spacing:0.449px;">Text - number</div><svg class="a" style="left:791px;top:441px" width="16" height="11" viewBox="0 0 16 11"><g transform="translate(0.50 0.60)"><path d="M2 2 L7.10 7.80 L12.20 2" fill="none" stroke="#d6d6d6" stroke-width="2.0" stroke-linecap="round" stroke-linejoin="round"/></g></svg>
<svg class="a" style="left:578px;top:475px" width="24" height="24" viewBox="0 0 24 24"><g transform="translate(0.20 0.10)"><rect x="0" y="0" width="22.6" height="22.6" rx="5.6" fill="#3f7ae8"/><path d="M5.0 12.9 L10.3 17.0 L17.9 4.6" fill="none" stroke="#fff" stroke-width="2.7" stroke-linecap="round" stroke-linejoin="round"/></g></svg>
<div class="t" style="left:606.50px;top:475.44px;font-size:16.9px;color:#c4c4c4;letter-spacing:0.415px;">Continue numbering</div>
<svg class="a" style="left:403px;top:514px" width="426" height="15" viewBox="0 0 426 15"><g transform="translate(0.00 0.70)"><path d="M0 1.5 H201.80 L212.80 11.6 L223.80 1.5 H425" fill="none" stroke="#484848" stroke-width="1.1" stroke-linejoin="round"/></g></svg>
<svg class="a" style="left:423px;top:548px" width="18" height="13" viewBox="0 0 18 13"><g transform="translate(0.10 0.70)"><path d="M2 2 L8.30 9.40 L14.60 2" fill="none" stroke="#b4b4b4" stroke-width="2.7" stroke-linecap="round" stroke-linejoin="round"/></g></svg>
<div class="pop" style="left:459.4px;top:539.20px;width:351.2px;height:29.6px"></div><div class="t" style="left:469.40px;top:543.14px;font-size:16.9px;color:#cdcdcd;letter-spacing:0.182px;">Set Extension</div><svg class="a" style="left:791px;top:549px" width="16" height="11" viewBox="0 0 16 11"><g transform="translate(0.50 0.60)"><path d="M2 2 L7.10 7.80 L12.20 2" fill="none" stroke="#d6d6d6" stroke-width="2.0" stroke-linecap="round" stroke-linejoin="round"/></g></svg>
<div class="t" style="left:459.90px;top:598.94px;font-size:16.9px;color:#c4c4c4;letter-spacing:0.163px;">Extension:</div>
<div class="fld" style="left:576.2px;top:594.70px;width:234.4px;height:30.2px"></div><div class="t" style="left:587.90px;top:598.94px;font-size:16.9px;color:#b8b8b8;letter-spacing:-0.603px;">PNG</div>
<svg class="a" style="left:403px;top:647px" width="426" height="15" viewBox="0 0 426 15"><g transform="translate(0.00 0.20)"><path d="M0 1.5 H201.80 L212.80 11.6 L223.80 1.5 H425" fill="none" stroke="#484848" stroke-width="1.1" stroke-linejoin="round"/></g></svg>
<svg class="a" style="left:423px;top:681px" width="18" height="13" viewBox="0 0 18 13"><g transform="translate(0.10 0.20)"><path d="M2 2 L8.30 9.40 L14.60 2" fill="none" stroke="#b4b4b4" stroke-width="2.7" stroke-linecap="round" stroke-linejoin="round"/></g></svg>
<div class="pop" style="left:459.4px;top:671.70px;width:351.2px;height:29.6px"></div><div class="t" style="left:469.40px;top:675.64px;font-size:16.9px;color:#cdcdcd;letter-spacing:0.344px;">Insert Characters</div><svg class="a" style="left:791px;top:682px" width="16" height="11" viewBox="0 0 16 11"><g transform="translate(0.50 0.10)"><path d="M2 2 L7.10 7.80 L12.20 2" fill="none" stroke="#d6d6d6" stroke-width="2.0" stroke-linecap="round" stroke-linejoin="round"/></g></svg>
<div class="t" style="left:459.90px;top:730.94px;font-size:16.9px;color:#c4c4c4;letter-spacing:0.441px;">Apply to:</div>
<div class="pop" style="left:577.3px;top:727.00px;width:233.3px;height:29.6px"></div><div class="t" style="left:587.30px;top:730.94px;font-size:16.9px;color:#cdcdcd;letter-spacing:0.135px;">Name Only</div><svg class="a" style="left:791px;top:737px" width="16" height="11" viewBox="0 0 16 11"><g transform="translate(0.50 0.40)"><path d="M2 2 L7.10 7.80 L12.20 2" fill="none" stroke="#d6d6d6" stroke-width="2.0" stroke-linecap="round" stroke-linejoin="round"/></g></svg>
<div class="t" style="left:459.90px;top:773.14px;font-size:16.9px;color:#c4c4c4;letter-spacing:0.428px;">Insert text:</div>
<div class="fld" style="left:576.2px;top:768.90px;width:234.4px;height:30.2px"></div><div class="t" style="left:588.60px;top:773.14px;font-size:16.9px;color:#b8b8b8;letter-spacing:0.420px;">(Spring 2023)</div>
<div class="t" style="left:459.90px;top:814.84px;font-size:16.9px;color:#c4c4c4;letter-spacing:0.420px;">At position:</div>
<div class="fld" style="left:578.2px;top:810.60px;width:50.6px;height:30.2px"></div><div class="t" style="left:589.20px;top:814.84px;font-size:16.9px;color:#b8b8b8;">0</div>
<div class="stp" style="left:643.0px;top:808.90px;width:21.6px;height:31.8px"></div><div class="b" style="left:644.0px;top:824.30px;width:19.6px;height:1px;background:#454545"></div><svg class="a" style="left:646px;top:812px" width="16" height="11" viewBox="0 0 16 11"><g transform="translate(0.70 0.80)"><path d="M2 7.60 L7.10 2 L12.20 7.60" fill="none" stroke="#aeaeae" stroke-width="2.3" stroke-linecap="round" stroke-linejoin="round"/></g></svg><svg class="a" style="left:646px;top:827px" width="16" height="11" viewBox="0 0 16 11"><g transform="translate(0.70 0.60)"><path d="M2 2 L7.10 7.60 L12.20 2" fill="none" stroke="#aeaeae" stroke-width="2.3" stroke-linecap="round" stroke-linejoin="round"/></g></svg>
<div class="b" style="left:677.4px;top:812.0px;width:133.3px;height:27.5px;border:1px solid #4e4e4e;border-radius:7px;background:#2a2a2a;overflow:hidden"><div style="position:absolute;left:-1px;top:-1px;width:66.6px;height:28px;background:#5d5d5d"></div></div>
<svg class="a" style="left:682px;top:819px" width="18" height="15" viewBox="0 0 18 15"><g transform="translate(0.40 0.00)"><path d="M2 7 H14.4 M9.8 2.4000000000000004 L14.4 7 L9.8 11.6" fill="none" stroke="#a9a9a9" stroke-width="1.7" stroke-linecap="round" stroke-linejoin="round"/></g></svg>
<div class="t" style="left:703.90px;top:815.04px;font-size:16.9px;color:#ffffff;font-weight:700;-webkit-text-stroke:0;letter-spacing:-0.336px;">abc</div>
<div class="t" style="left:755.30px;top:815.04px;font-size:16.9px;color:#c6c6c6;letter-spacing:0.289px;">abc</div>
<svg class="a" style="left:788px;top:819px" width="18" height="15" viewBox="0 0 18 15"><g transform="translate(0.40 0.00)"><path d="M14.4 7 H2 M6.6 2.4000000000000004 L2 7 L6.6 11.6" fill="none" stroke="#c6c6c6" stroke-width="1.7" stroke-linecap="round" stroke-linejoin="round"/></g></svg>
<svg class="a" style="left:403px;top:862px" width="426" height="15" viewBox="0 0 426 15"><g transform="translate(0.00 0.80)"><path d="M0 1.5 H201.80 L212.80 11.6 L223.80 1.5 H425" fill="none" stroke="#484848" stroke-width="1.1" stroke-linejoin="round"/></g></svg>
<svg class="a" style="left:721px;top:1159px" width="23" height="23" viewBox="0 0 23 23"><g transform="translate(0.00 0.40)"><path d="M1 10.9 H20.8 M10.9 1 V20.8" stroke="#f0f0f0" stroke-width="1.7" stroke-linecap="round" fill="none"/></g></svg>
<svg class="a" style="left:777px;top:1168px" width="23" height="5" viewBox="0 0 23 5"><g transform="translate(0.10 0.30)"><path d="M1 2 H20.8" stroke="#5e5e5e" stroke-width="1.7" stroke-linecap="round" fill="none"/></g></svg>
<div class="t" style="left:845.80px;top:117.82px;font-size:19.0px;color:#adadad;font-weight:700;-webkit-text-stroke:0;letter-spacing:0.029px;">Current Name</div>
<div class="t" style="left:1357.00px;top:116.32px;font-size:19.0px;color:#9a9a9a;font-weight:700;-webkit-text-stroke:0;letter-spacing:-0.026px;">New Name</div>
<div class="b" style="left:829px;top:152.3px;width:1020px;height:1047px;background:#1b1b1b"></div>
<div class="b" style="left:829px;top:152.30px;width:1020px;height:40.0px;background:#363636"></div>
<div class="t" style="left:845.90px;top:160.42px;font-size:19.0px;color:#878787;">image1.jpg</div>
<div class="t" style="left:1357.20px;top:160.42px;font-size:19.0px;color:#f4f4f4;letter-spacing:0.160px;">(Spring 2023) Family Holidays #001.PNG</div>
<div class="t" style="left:845.90px;top:199.61px;font-size:19.0px;color:#999999;">image2.jpg</div>
<div class="t" style="left:1357.20px;top:199.61px;font-size:19.0px;color:#f4f4f4;letter-spacing:0.160px;">(Spring 2023) Family Holidays #002.PNG</div>
<div class="b" style="left:829px;top:230.68px;width:1020px;height:39.2px;background:#363636"></div>
<div class="t" style="left:845.90px;top:238.80px;font-size:19.0px;color:#878787;">image3.jpg</div>
<div class="t" style="left:1357.20px;top:238.80px;font-size:19.0px;color:#f4f4f4;letter-spacing:0.160px;">(Spring 2023) Family Holidays #003.PNG</div>
<div class="t" style="left:845.90px;top:277.99px;font-size:19.0px;color:#999999;">image4.jpg</div>
<div class="t" style="left:1357.20px;top:277.99px;font-size:19.0px;color:#f4f4f4;letter-spacing:0.160px;">(Spring 2023) Family Holidays #004.PNG</div>
<div class="b" style="left:829px;top:309.06px;width:1020px;height:39.2px;background:#363636"></div>
<div class="t" style="left:845.90px;top:317.18px;font-size:19.0px;color:#878787;">image5.jpg</div>
<div class="t" style="left:1357.20px;top:317.18px;font-size:19.0px;color:#f4f4f4;letter-spacing:0.160px;">(Spring 2023) Family Holidays #005.PNG</div>
<div class="t" style="left:845.90px;top:356.37px;font-size:19.0px;color:#999999;">image6.jpg</div>
<div class="t" style="left:1357.20px;top:356.37px;font-size:19.0px;color:#f4f4f4;letter-spacing:0.160px;">(Spring 2023) Family Holidays #006.PNG</div>
<div class="b" style="left:829px;top:387.44px;width:1020px;height:39.2px;background:#363636"></div>
<div class="t" style="left:845.90px;top:395.56px;font-size:19.0px;color:#878787;">image7.jpg</div>
<div class="t" style="left:1357.20px;top:395.56px;font-size:19.0px;color:#f4f4f4;letter-spacing:0.160px;">(Spring 2023) Family Holidays #007.PNG</div>
<div class="t" style="left:845.90px;top:434.75px;font-size:19.0px;color:#999999;">image8.jpg</div>
<div class="t" style="left:1357.20px;top:434.75px;font-size:19.0px;color:#f4f4f4;letter-spacing:0.160px;">(Spring 2023) Family Holidays #008.PNG</div>
<div class="b" style="left:829px;top:465.82px;width:1020px;height:39.2px;background:#363636"></div>
<div class="t" style="left:845.90px;top:473.94px;font-size:19.0px;color:#878787;">image9.jpg</div>
<div class="t" style="left:1357.20px;top:473.94px;font-size:19.0px;color:#f4f4f4;letter-spacing:0.160px;">(Spring 2023) Family Holidays #009.PNG</div>
<div class="t" style="left:845.90px;top:513.13px;font-size:19.0px;color:#999999;">image10.jpg</div>
<div class="t" style="left:1357.20px;top:513.13px;font-size:19.0px;color:#f4f4f4;letter-spacing:0.160px;">(Spring 2023) Family Holidays #010.PNG</div>
<div class="b" style="left:829px;top:544.20px;width:1020px;height:39.2px;background:#363636"></div>
<div class="t" style="left:845.90px;top:552.32px;font-size:19.0px;color:#878787;">image11.jpg</div>
<div class="t" style="left:1357.20px;top:552.32px;font-size:19.0px;color:#f4f4f4;letter-spacing:0.160px;">(Spring 2023) Family Holidays #011.PNG</div>
<div class="t" style="left:845.90px;top:591.51px;font-size:19.0px;color:#999999;">image12.jpg</div>
<div class="t" style="left:1357.20px;top:591.51px;font-size:19.0px;color:#f4f4f4;letter-spacing:0.160px;">(Spring 2023) Family Holidays #012.PNG</div>
<div class="b" style="left:829px;top:622.58px;width:1020px;height:39.2px;background:#363636"></div>
<div class="t" style="left:845.90px;top:630.70px;font-size:19.0px;color:#878787;">image13.jpg</div>
<div class="t" style="left:1357.20px;top:630.70px;font-size:19.0px;color:#f4f4f4;letter-spacing:0.160px;">(Spring 2023) Family Holidays #013.PNG</div>
<div class="t" style="left:845.90px;top:669.89px;font-size:19.0px;color:#999999;">image14.jpg</div>
<div class="t" style="left:1357.20px;top:669.89px;font-size:19.0px;color:#f4f4f4;letter-spacing:0.160px;">(Spring 2023) Family Holidays #014.PNG</div>
<div class="b" style="left:829px;top:700.96px;width:1020px;height:39.2px;background:#363636"></div>
<div class="t" style="left:845.90px;top:709.08px;font-size:19.0px;color:#878787;">image15.jpg</div>
<div class="t" style="left:1357.20px;top:709.08px;font-size:19.0px;color:#f4f4f4;letter-spacing:0.160px;">(Spring 2023) Family Holidays #015.PNG</div>
<div class="t" style="left:845.90px;top:748.27px;font-size:19.0px;color:#999999;">image16.jpg</div>
<div class="t" style="left:1357.20px;top:748.27px;font-size:19.0px;color:#f4f4f4;letter-spacing:0.160px;">(Spring 2023) Family Holidays #016.PNG</div>
<div class="b" style="left:829px;top:779.34px;width:1020px;height:39.2px;background:#363636"></div>
<div class="t" style="left:845.90px;top:787.46px;font-size:19.0px;color:#878787;">image17.jpg</div>
<div class="t" style="left:1357.20px;top:787.46px;font-size:19.0px;color:#f4f4f4;letter-spacing:0.160px;">(Spring 2023) Family Holidays #017.PNG</div>
<div class="t" style="left:845.90px;top:826.65px;font-size:19.0px;color:#999999;">image18.jpg</div>
<div class="t" style="left:1357.20px;top:826.65px;font-size:19.0px;color:#f4f4f4;letter-spacing:0.160px;">(Spring 2023) Family Holidays #018.PNG</div>
<div class="b" style="left:829px;top:857.72px;width:1020px;height:39.2px;background:#363636"></div>
<div class="t" style="left:845.90px;top:865.84px;font-size:19.0px;color:#878787;">image19.jpg</div>
<div class="t" style="left:1357.20px;top:865.84px;font-size:19.0px;color:#f4f4f4;letter-spacing:0.160px;">(Spring 2023) Family Holidays #019.PNG</div>
<div class="t" style="left:845.90px;top:905.03px;font-size:19.0px;color:#999999;">image20.jpg</div>
<div class="t" style="left:1357.20px;top:905.03px;font-size:19.0px;color:#f4f4f4;letter-spacing:0.160px;">(Spring 2023) Family Holidays #020.PNG</div>
<div class="b" style="left:829px;top:936.10px;width:1020px;height:39.2px;background:#363636"></div>
<div class="t" style="left:845.90px;top:944.22px;font-size:19.0px;color:#878787;">image21.jpg</div>
<div class="t" style="left:1357.20px;top:944.22px;font-size:19.0px;color:#f4f4f4;letter-spacing:0.160px;">(Spring 2023) Family Holidays #021.PNG</div>
<div class="t" style="left:845.90px;top:983.41px;font-size:19.0px;color:#999999;">image22.jpg</div>
<div class="t" style="left:1357.20px;top:983.41px;font-size:19.0px;color:#f4f4f4;letter-spacing:0.160px;">(Spring 2023) Family Holidays #022.PNG</div>
<div class="b" style="left:829px;top:1014.48px;width:1020px;height:39.2px;background:#363636"></div>
<div class="t" style="left:845.90px;top:1022.60px;font-size:19.0px;color:#878787;">image23.jpg</div>
<div class="t" style="left:1357.20px;top:1022.60px;font-size:19.0px;color:#f4f4f4;letter-spacing:0.160px;">(Spring 2023) Family Holidays #023.PNG</div>
<div class="t" style="left:845.90px;top:1061.79px;font-size:19.0px;color:#999999;">image24.jpg</div>
<div class="t" style="left:1357.20px;top:1061.79px;font-size:19.0px;color:#f4f4f4;letter-spacing:0.160px;">(Spring 2023) Family Holidays #024.PNG</div>
<div class="b" style="left:829px;top:1092.86px;width:1020px;height:39.2px;background:#363636"></div>
<div class="t" style="left:845.90px;top:1100.98px;font-size:19.0px;color:#878787;">image25.jpg</div>
<div class="t" style="left:1357.20px;top:1100.98px;font-size:19.0px;color:#f4f4f4;letter-spacing:0.160px;">(Spring 2023) Family Holidays #025.PNG</div>
<div class="t" style="left:845.90px;top:1140.17px;font-size:19.0px;color:#999999;">image26.jpg</div>
<div class="t" style="left:1357.20px;top:1140.17px;font-size:19.0px;color:#f4f4f4;letter-spacing:0.160px;">(Spring 2023) Family Holidays #026.PNG</div>
<div class="b" style="left:829px;top:1171.24px;width:1020px;height:39.2px;background:#363636"></div>
<div class="t" style="left:845.90px;top:1179.36px;font-size:19.0px;color:#878787;">image27.jpg</div>
<div class="t" style="left:1357.20px;top:1179.36px;font-size:19.0px;color:#f4f4f4;letter-spacing:0.160px;">(Spring 2023) Family Holidays #027.PNG</div>
<div class="b" style="left:1338.7px;top:103px;width:1px;height:1096px;background:rgba(255,255,255,.075)"></div>
<div class="b" style="left:1849px;top:103px;width:22px;height:1096px;background:#2b2b2b;border-left:1px solid #3c3c3c"></div>
<div class="b" style="left:1855.2px;top:107.6px;width:11px;height:976px;border-radius:5.5px;background:#6c6c6c"></div>
</div></div><div class="rim"></div></div>
</body></html>
